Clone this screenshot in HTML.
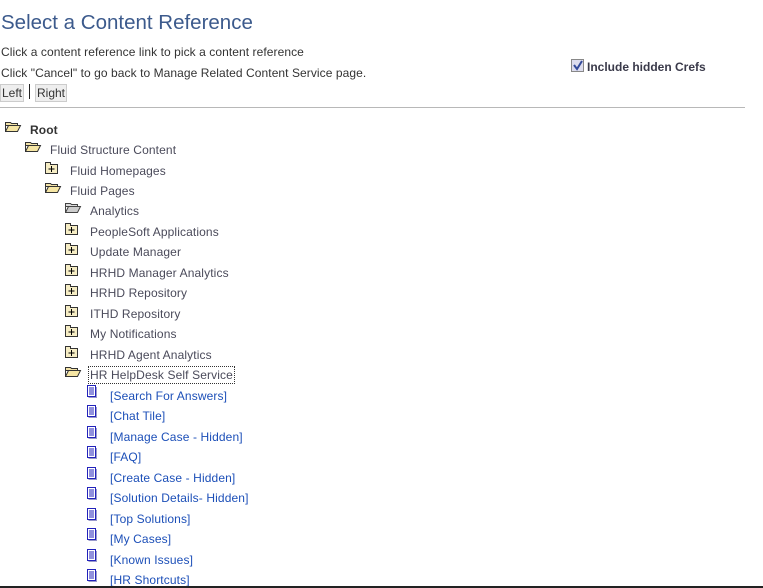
<!DOCTYPE html>
<html><head><meta charset="utf-8"><style>
body{margin:0;width:763px;height:588px;background:#fff;font-family:"Liberation Sans",Arial,sans-serif;position:relative;overflow:hidden}
.a{position:absolute;white-space:nowrap}
h1{position:absolute;left:1px;top:11px;margin:0;font-size:20.5px;font-weight:normal;color:#3c5a8c}
.t{font-size:12px;color:#333;letter-spacing:0.07px}
.btn{position:absolute;top:84px;height:16px;background:#eee;border:1px solid #ccc;font-size:12px;line-height:16px;color:#333;padding:0 1px}
.r{position:absolute;height:16px;line-height:16px;font-size:12px;color:#4a4a5a;white-space:nowrap;letter-spacing:0.12px}
.r svg{position:absolute;top:0}
.r span{position:absolute;top:1px}
.l span{color:#1c4fb8}
</style></head><body>
<h1>Select a Content Reference</h1>
<div class="a t" style="left:1px;top:45px">Click a content reference link to pick a content reference</div>
<div class="a t" style="left:1px;top:66px">Click "Cancel" to go back to Manage Related Content Service page.</div>
<div class="btn" style="left:0">Left</div>
<div class="a" style="left:29px;top:84px;width:1px;height:15px;background:#222"></div>
<div class="btn" style="left:35px">Right</div>
<div class="a" style="left:571px;top:59px;width:11px;height:11px;border:1px solid #888;background:#dde"><svg width="11" height="11" style="position:absolute;left:0;top:0"><path d="M2 5 L5 9 L10 1" stroke="#334a9a" stroke-width="2" fill="none"/></svg></div>
<div class="a" style="left:587px;top:60px;font-size:12px;font-weight:bold;color:#3a3a4a">Include hidden Crefs</div>
<div class="a" style="left:0;top:107px;width:745px;height:1px;background:#b8b8b8"></div>

<svg width="0" height="0" style="position:absolute"><defs>
<g id="fo"><path d="M0.5 1.5 h5 l1 1 h6 v2 h-12 z" fill="#f3e3a8" stroke="#333"/><path d="M0.5 10.5 l3 -6 h12 l-3 6 z" fill="#f6e6a4" stroke="#333"/><path d="M0.5 1.5 v9" stroke="#333" fill="none"/></g>
<g id="fg"><path d="M0.5 1.5 h5 l1 1 h6 v2 h-12 z" fill="#ddd" stroke="#444"/><path d="M0.5 10.5 l3 -6 h12 l-3 6 z" fill="#ccc" stroke="#444"/><path d="M0.5 1.5 v9" stroke="#444" fill="none"/></g>
<g id="fp"><path d="M0.5 0.5 h5 v2 h7 v9 h-12 z" fill="#f6edc4" stroke="#333"/><path d="M6.5 4 v6 M3.5 7 h6" stroke="#000" fill="none"/></g>
<g id="dc"><path d="M9.5 2 v10.5 h-8" stroke="#9999cc" fill="none"/><rect x="0.5" y="0.5" width="8" height="11" fill="#fff" stroke="#2222bb"/><path d="M2 3h5M2 5h5M2 7h5M2 9h5" stroke="#2222bb" fill="none"/></g>
</defs></svg>

<div class="r" style="left:0;top:121px"><svg width="18" height="13" style="left:5px"><use href="#fo"/></svg><span style="left:30px;font-weight:bold;color:#333">Root</span></div>
<div class="r" style="left:0;top:141px"><svg width="18" height="13" style="left:25px"><use href="#fo"/></svg><span style="left:50px">Fluid Structure Content</span></div>
<div class="r" style="left:0;top:162px"><svg width="14" height="13" style="left:45px"><use href="#fp"/></svg><span style="left:70px">Fluid Homepages</span></div>
<div class="r" style="left:0;top:182px"><svg width="18" height="13" style="left:45px"><use href="#fo"/></svg><span style="left:70px">Fluid Pages</span></div>
<div class="r" style="left:0;top:202px"><svg width="18" height="13" style="left:65px"><use href="#fg"/></svg><span style="left:90px">Analytics</span></div>
<div class="r" style="left:0;top:223px"><svg width="14" height="13" style="left:65px"><use href="#fp"/></svg><span style="left:90px">PeopleSoft Applications</span></div>
<div class="r" style="left:0;top:243px"><svg width="14" height="13" style="left:65px"><use href="#fp"/></svg><span style="left:90px">Update Manager</span></div>
<div class="r" style="left:0;top:264px"><svg width="14" height="13" style="left:65px"><use href="#fp"/></svg><span style="left:90px">HRHD Manager Analytics</span></div>
<div class="r" style="left:0;top:284px"><svg width="14" height="13" style="left:65px"><use href="#fp"/></svg><span style="left:90px">HRHD Repository</span></div>
<div class="r" style="left:0;top:305px"><svg width="14" height="13" style="left:65px"><use href="#fp"/></svg><span style="left:90px">ITHD Repository</span></div>
<div class="r" style="left:0;top:325px"><svg width="14" height="13" style="left:65px"><use href="#fp"/></svg><span style="left:90px">My Notifications</span></div>
<div class="r" style="left:0;top:346px"><svg width="14" height="13" style="left:65px"><use href="#fp"/></svg><span style="left:90px">HRHD Agent Analytics</span></div>
<div class="r" style="left:0;top:366px"><svg width="18" height="13" style="left:65px"><use href="#fo"/></svg><span style="left:89px;outline:1px dotted #333;padding:0 1px">HR HelpDesk Self Service</span></div>
<div class="r l" style="left:0;top:387px"><svg width="11" height="13" style="left:87px;top:-2px"><use href="#dc"/></svg><span style="left:110px">[Search For Answers]</span></div>
<div class="r l" style="left:0;top:407px"><svg width="11" height="13" style="left:87px;top:-2px"><use href="#dc"/></svg><span style="left:110px">[Chat Tile]</span></div>
<div class="r l" style="left:0;top:428px"><svg width="11" height="13" style="left:87px;top:-2px"><use href="#dc"/></svg><span style="left:110px">[Manage Case - Hidden]</span></div>
<div class="r l" style="left:0;top:448px"><svg width="11" height="13" style="left:87px;top:-2px"><use href="#dc"/></svg><span style="left:110px">[FAQ]</span></div>
<div class="r l" style="left:0;top:469px"><svg width="11" height="13" style="left:87px;top:-2px"><use href="#dc"/></svg><span style="left:110px">[Create Case - Hidden]</span></div>
<div class="r l" style="left:0;top:489px"><svg width="11" height="13" style="left:87px;top:-2px"><use href="#dc"/></svg><span style="left:110px">[Solution Details- Hidden]</span></div>
<div class="r l" style="left:0;top:510px"><svg width="11" height="13" style="left:87px;top:-2px"><use href="#dc"/></svg><span style="left:110px">[Top Solutions]</span></div>
<div class="r l" style="left:0;top:530px"><svg width="11" height="13" style="left:87px;top:-2px"><use href="#dc"/></svg><span style="left:110px">[My Cases]</span></div>
<div class="r l" style="left:0;top:551px"><svg width="11" height="13" style="left:87px;top:-2px"><use href="#dc"/></svg><span style="left:110px">[Known Issues]</span></div>
<div class="r l" style="left:0;top:571px"><svg width="11" height="13" style="left:87px;top:-2px"><use href="#dc"/></svg><span style="left:110px">[HR Shortcuts]</span></div>
<div class="a" style="left:0;top:586px;width:763px;height:2px;background:#222"></div>
</body></html>
